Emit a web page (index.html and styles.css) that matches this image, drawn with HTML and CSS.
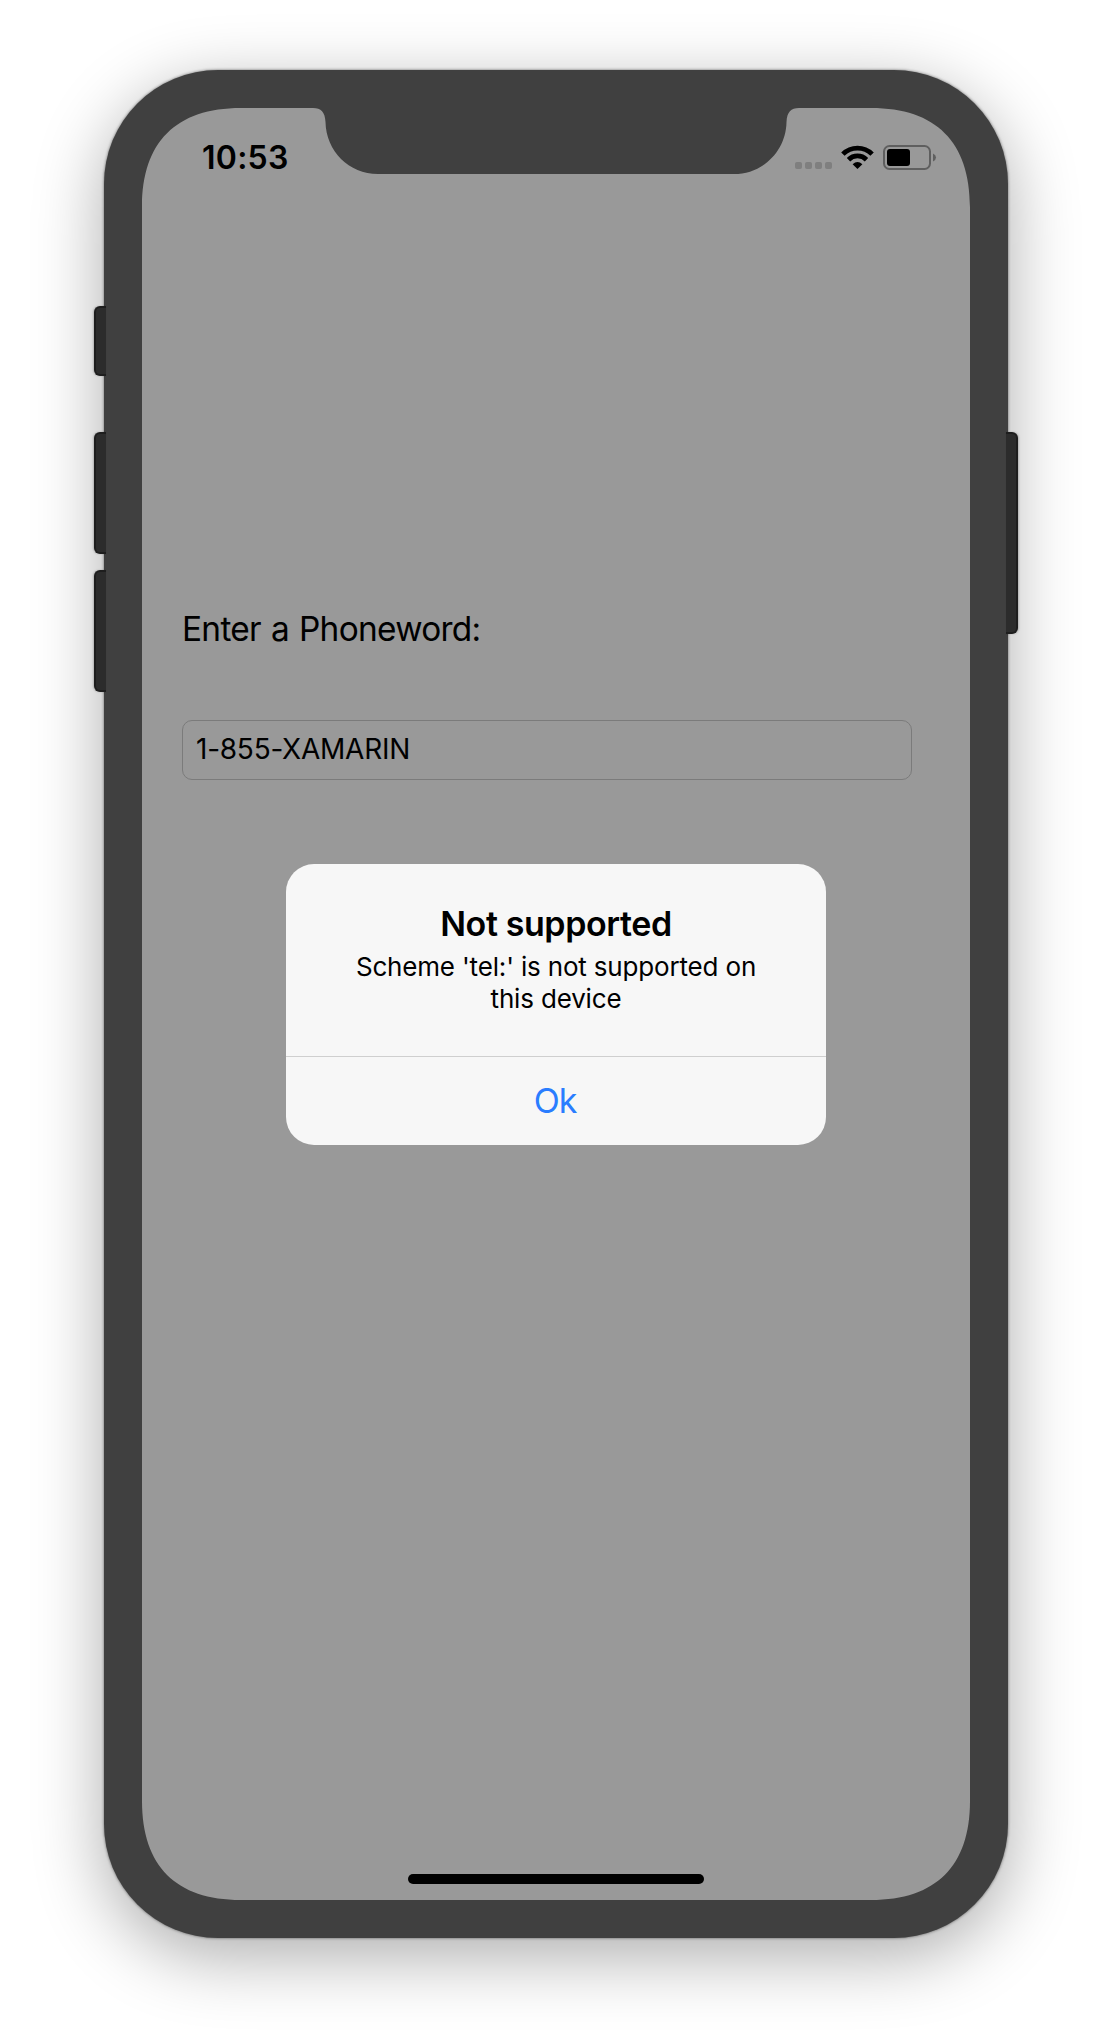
FILE: index.html
```html
<!DOCTYPE html>
<html lang="en">
<head>
<meta charset="utf-8">
<title>Phoneword</title>
<link rel="stylesheet" href="styles.css">
</head>
<body>
<div class="phone">
  <span class="key key-mute"></span>
  <span class="key key-up"></span>
  <span class="key key-down"></span>
  <span class="key key-power"></span>
  <main class="screen">
    <header class="status">
      <span class="clock">10:53</span>
      <svg class="indicators" width="142" height="28" viewBox="0 0 142 28">
        <g fill="#7f7f7f">
          <rect x="0" y="18" width="7" height="7" rx="2"/>
          <rect x="10" y="18" width="7" height="7" rx="2"/>
          <rect x="20" y="18" width="7" height="7" rx="2"/>
          <rect x="30" y="18" width="7" height="7" rx="2"/>
        </g>
        <g fill="none" stroke="#000" stroke-width="4.8">
          <path d="M47.9 10.1A20.6 20.6 0 0 1 77.1 10.1"/>
          <path d="M53.5 15.7A12.7 12.7 0 0 1 71.5 15.7"/>
        </g>
        <path d="M62.500 25L57.600 20.200Q62.500 15.800 67.400 20.200Z"/>
        <rect x="89" y="2" width="46" height="23" rx="5.5" fill="none" stroke="#5f5f5f" stroke-width="2"/>
        <rect x="92" y="5" width="23" height="17" rx="3"/>
        <path d="M138 9.500Q141 11 141 13.500T138 17.500Z" fill="#5f5f5f"/>
      </svg>
    </header>
    <section class="form">
      <div class="label">Enter a Phoneword:</div>
      <div class="field">1-855-XAMARIN</div>
    </section>
    <div class="home"></div>
    <div class="alert" role="alertdialog">
      <div class="alert-text">
        <h1>Not supported</h1>
        <p>Scheme 'tel:' is not supported on<br>this device</p>
      </div>
      <div class="ok">Ok</div>
    </div>
  </main>
</div>
</body>
</html>
```
FILE: styles.css
```css
* { box-sizing: border-box; }

body {
  margin: 0;
  padding: 70px 104px 102px;
  background: #fff;
  font-family: Inter, "Liberation Sans", sans-serif;
  color: #000;
}

.phone {
  position: relative;
  height: 1868px;
  padding: 38px;
  border-radius: 114px;
  background: #404040;
  box-shadow: 0 0 3px rgba(0, 0, 0, .55), 0 18px 70px rgba(0, 0, 0, .33);
}

/* hardware buttons hang over the edge of the case */
.key {
  position: absolute;
  left: -10px;
  width: 12px;
  height: 122px;
  border: 2px solid #1e1e1e;
  border-right: 0;
  border-radius: 6px 0 0 6px;
  background: #2c2c2c;
  box-shadow: -1px 0 2px rgba(0, 0, 0, .2);
}
.key-mute { top: 236px; height: 70px; }
.key-up { top: 362px; }
.key-down { top: 500px; }
.key-power {
  top: 362px;
  left: auto;
  right: -10px;
  height: 202px;
  border-right: 2px solid #1e1e1e;
  border-left: 0;
  border-radius: 0 6px 6px 0;
  box-shadow: 1px 0 2px rgba(0, 0, 0, .2);
}

.screen {
  position: relative;
  display: flex;
  flex-direction: column;
  height: 1792px;
  background: #999;
  clip-path: path("M0 99C0 34 34 0 99 0H171C179 0 183 4 183.500 14C184 43 207 66 236 66H592C621 66 644 43 644.500 14C645 4 649 0 657 0H729C794 0 828 34 828 99V1693C828 1758 794 1792 729 1792H99C34 1792 0 1758 0 1693Z");
}

.status {
  display: flex;
  justify-content: space-between;
  height: 100px;
  padding: 36px 33px 0 60px;
}
.clock { font-size: 32px; font-weight: 600; line-height: 28px; letter-spacing: .25px; }

.form { padding: 379px 58px 0 40px; }
.label { font-size: 33.4px; line-height: 84px; letter-spacing: -.7px; word-spacing: 1.3px; }
.field {
  height: 60px;
  margin-top: 49px;
  padding-left: 13px;
  border: 1px solid #7b7b7b;
  border-radius: 10px;
  font-size: 28px;
  line-height: 56px;
  letter-spacing: -.24px;
}

.home {
  width: 296px;
  height: 10px;
  margin: auto auto 16px;
  border-radius: 5px;
  background: #000;
}

/* alert floats above the form */
.alert {
  position: absolute;
  top: 756px;
  left: 144px;
  width: 540px;
  height: 281px;
  border-radius: 28px;
  background: #f7f7f7;
  text-align: center;
}
.alert-text { height: 193px; padding-top: 38px; border-bottom: 1px solid #cfcfcf; }
h1 { margin: 0; font-size: 34px; font-weight: 600; line-height: 44px; letter-spacing: -.4px; }
p { margin: 5px 0 0; font-size: 26px; line-height: 32px; letter-spacing: -.17px; }
.ok { padding-right: 2px; color: #2a7dff; font-size: 34px; line-height: 88px; letter-spacing: -1.2px; }
```
